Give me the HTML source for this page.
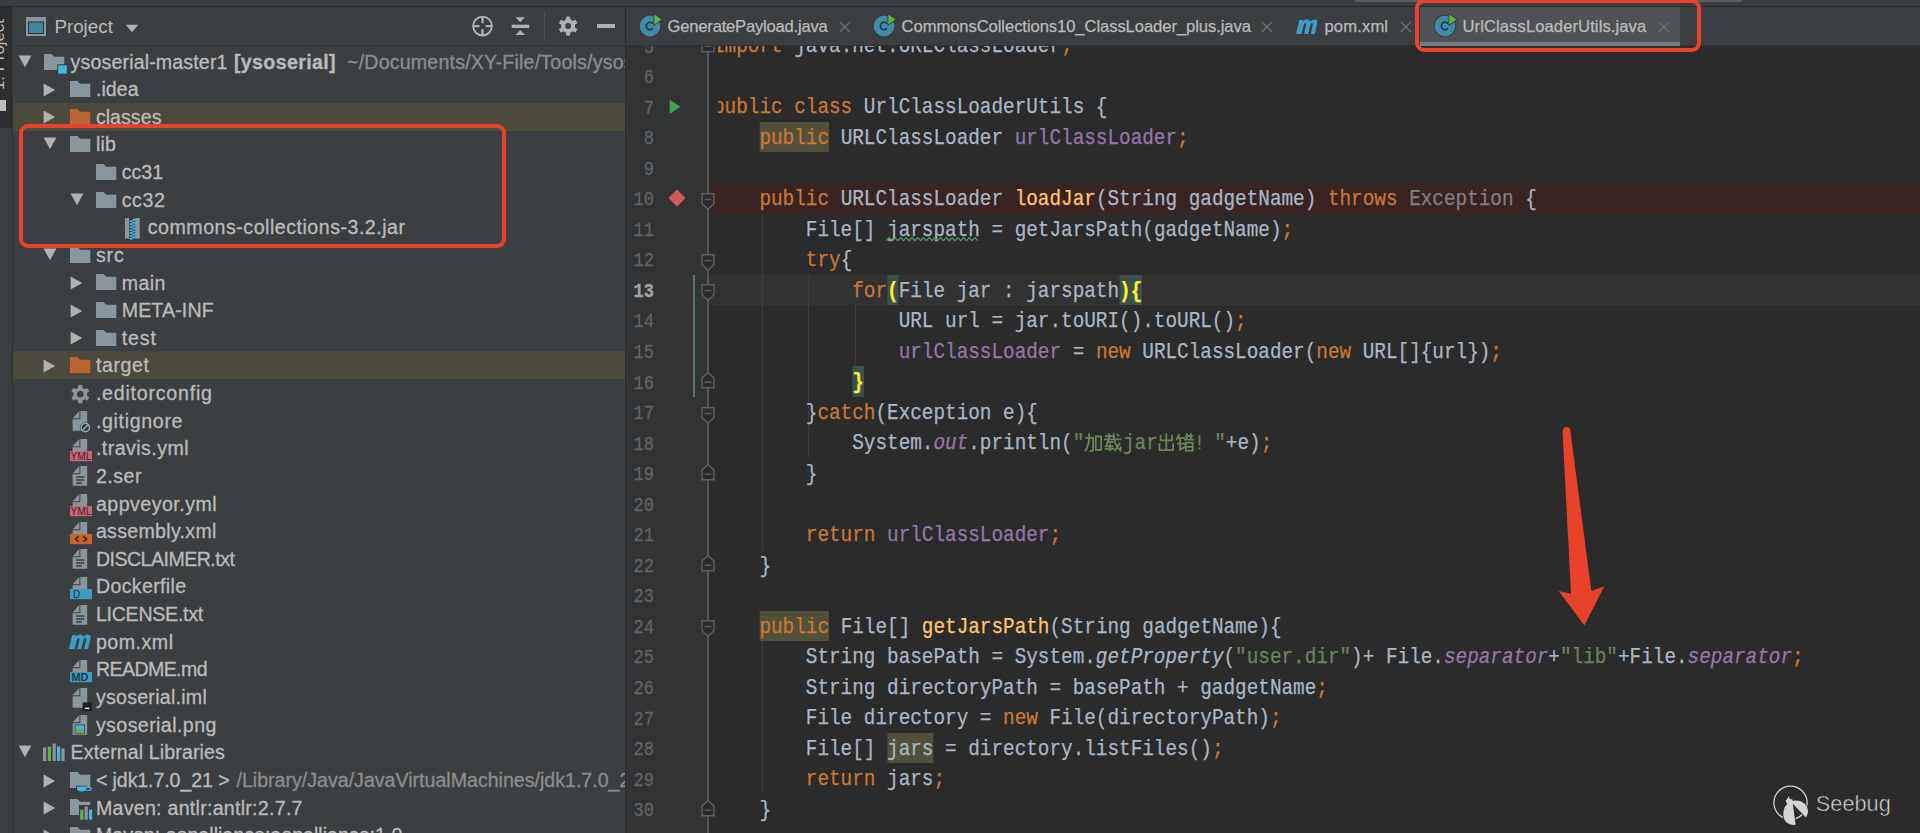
<!DOCTYPE html><html><head><meta charset="utf-8"><style>
*{margin:0;padding:0;box-sizing:border-box}
html,body{width:1920px;height:833px;overflow:hidden;background:#2B2B2B}
body{position:relative;font-family:"Liberation Sans",sans-serif}
.abs{position:absolute}
.row{position:absolute;left:13px;width:612px;height:27.63px;white-space:nowrap}
.tx{position:absolute;top:0;height:27.63px;line-height:27.63px;font-size:19.6px;color:#BBBBBB;white-space:pre;-webkit-text-stroke-width:0.3px}
.tri{position:absolute}
.ic{position:absolute;width:24px;height:24px}
.code{position:absolute;left:717.5px;top:46px;width:1204px;height:787px;overflow:hidden}
.ln{position:absolute;left:0;height:30.545px;line-height:30.545px;font-family:"Liberation Mono",monospace;font-size:21.5px;letter-spacing:0;transform:scaleX(0.8992);transform-origin:0 0;color:#A9B7C6;white-space:pre;-webkit-text-stroke-width:0.25px}
.k{color:#CC7832}
.f{color:#9876AA}
.m{color:#FFC66D}
.s{color:#6A8759}
.i{font-style:italic}
.w,.bm{position:relative;display:inline-block;height:30.545px;vertical-align:top}
.w::before,.bm::before{content:"";position:absolute;left:0;right:0;top:-1.0px;height:30.4px;z-index:-1}
.w::before{background:#52503A}
.bm::before{background:#3B514D}
.bm{color:#FFEF28;font-weight:bold}
.gr{color:#808080}
.cj{display:inline-block;width:21.5px}
.num{position:absolute;left:606px;width:48px;text-align:right;height:30.545px;line-height:30.545px;font-family:"Liberation Mono",monospace;font-size:20px;transform:scaleX(0.85);transform-origin:100% 0;color:#606366;-webkit-text-stroke-width:0.3px}
.tab{position:absolute;top:8px;height:38px;line-height:38px;font-size:16.5px;color:#BBBBBB;white-space:pre;-webkit-text-stroke-width:0.25px}
</style></head><body>
<div class="abs" style="left:0;top:0;width:1920px;height:6px;background:#3C3F41"></div>
<div class="abs" style="left:1355px;top:0;width:387px;height:2px;background:#5A5D5F;border-radius:1px"></div>
<div class="abs" style="left:0;top:6px;width:1920px;height:1px;background:#2B2B2B"></div>
<div class="abs" style="left:0;top:7px;width:12px;height:826px;background:#3C3F41"></div>
<div class="abs" style="left:0;top:7px;width:12px;height:121px;background:#2C2E30"></div>
<div class="abs" style="left:12px;top:7px;width:1px;height:826px;background:#2F3133"></div>
<div class="abs" style="left:13px;top:7px;width:612px;height:826px;background:#3C3F41"></div>
<div class="abs" style="left:13px;top:45px;width:612px;height:1px;background:#323232"></div>
<div class="abs" style="left:625px;top:7px;width:1px;height:826px;background:#2B2B2B"></div>
<div class="abs" style="left:626px;top:7px;width:1294px;height:38px;background:#3C3F41"></div>
<div class="abs" style="left:626px;top:45px;width:1294px;height:1px;background:#323232"></div>
<div class="abs" style="left:626px;top:46px;width:82px;height:787px;background:#313335"></div>
<div class="abs" style="left:708px;top:183.09px;width:1212px;height:30.545px;background:#3A2323"></div>
<div class="abs" style="left:626px;top:274.73px;width:82px;height:30.545px;background:#333537"></div>
<div class="abs" style="left:708px;top:274.73px;width:1212px;height:30.545px;background:#323232"></div>
<div class="abs" style="left:762.0px;top:213.63px;width:1px;height:336.00px;background:#3B3B3B"></div>
<div class="abs" style="left:808.4px;top:274.73px;width:1px;height:152.73px;background:#3B3B3B"></div>
<div class="abs" style="left:854.8px;top:305.27px;width:1px;height:61.09px;background:#3B3B3B"></div>
<div class="abs" style="left:808.4px;top:427.45px;width:1px;height:30.55px;background:#3B3B3B"></div>
<div class="abs" style="left:762.0px;top:641.26px;width:1px;height:152.73px;background:#3B3B3B"></div>
<div class="code">
<div class="ln" style="top:-14.64px;left:-4.90px"><span class="k">import</span> java.net.URLClassLoader<span class="k">;</span></div>
<div class="ln" style="top:15.91px;left:-4.90px"></div>
<div class="ln" style="top:46.45px;left:-4.90px"><span class="k">public class</span> UrlClassLoaderUtils {</div>
<div class="ln" style="top:77.00px;left:-4.90px">    <span class="k w">public</span> URLClassLoader <span class="f">urlClassLoader</span><span class="k">;</span></div>
<div class="ln" style="top:107.55px;left:-4.90px"></div>
<div class="ln" style="top:138.09px;left:-4.90px">    <span class="k">public</span> URLClassLoader <span class="m">loadJar</span>(String gadgetName) <span class="k">throws</span> <span class="gr">Exception</span> {</div>
<div class="ln" style="top:168.63px;left:-4.90px">        File[] <span class="typo">jarspath</span> = getJarsPath(gadgetName)<span class="k">;</span></div>
<div class="ln" style="top:199.18px;left:-4.90px">        <span class="k">try</span>{</div>
<div class="ln" style="top:229.73px;left:-4.90px">            <span class="k">for</span><span class="bm">(</span>File jar : jarspath<span class="bm">){</span></div>
<div class="ln" style="top:260.27px;left:-4.90px">                URL url = jar.toURI().toURL()<span class="k">;</span></div>
<div class="ln" style="top:290.81px;left:-4.90px">                <span class="f">urlClassLoader</span> = <span class="k">new</span> URLClassLoader(<span class="k">new</span> URL[]{url})<span class="k">;</span></div>
<div class="ln" style="top:321.36px;left:-4.90px">            <span class="bm">}</span></div>
<div class="ln" style="top:351.91px;left:-4.90px">        }<span class="k">catch</span>(Exception e){</div>
<div class="ln" style="top:382.45px;left:-4.90px">            System.<span class="f i">out</span>.println(<span class="s">"<span class="cj"></span><span class="cj"></span>jar<span class="cj"></span><span class="cj"></span><span class="cj" style="width:19.8px"></span>"</span>+e)<span class="k">;</span></div>
<div class="ln" style="top:413.00px;left:-4.90px">        }</div>
<div class="ln" style="top:443.54px;left:-4.90px"></div>
<div class="ln" style="top:474.09px;left:-4.90px">        <span class="k">return</span> <span class="f">urlClassLoader</span><span class="k">;</span></div>
<div class="ln" style="top:504.63px;left:-4.90px">    }</div>
<div class="ln" style="top:535.17px;left:-4.90px"></div>
<div class="ln" style="top:565.72px;left:-4.90px">    <span class="k w">public</span> File[] <span class="m">getJarsPath</span>(String gadgetName){</div>
<div class="ln" style="top:596.26px;left:-4.90px">        String basePath = System.<span class="i">getProperty</span>(<span class="s">"user.dir"</span>)+ File.<span class="f i">separator</span>+<span class="s">"lib"</span>+File.<span class="f i">separator</span><span class="k">;</span></div>
<div class="ln" style="top:626.81px;left:-4.90px">        String directoryPath = basePath + gadgetName<span class="k">;</span></div>
<div class="ln" style="top:657.36px;left:-4.90px">        File directory = <span class="k">new</span> File(directoryPath)<span class="k">;</span></div>
<div class="ln" style="top:687.90px;left:-4.90px">        File[] <span class="w">jars</span> = directory.listFiles()<span class="k">;</span></div>
<div class="ln" style="top:718.45px;left:-4.90px">        <span class="k">return</span> jars<span class="k">;</span></div>
<div class="ln" style="top:748.99px;left:-4.90px">    }</div>
</div>
<div class="abs" style="left:0;top:46px;width:1920px;height:787px;overflow:hidden"><div class="abs" style="left:0;top:-46px;width:1920px;height:833px">
<div class="num" style="top:32.56px;color:#606366;">5</div>
<div class="num" style="top:63.11px;color:#606366;">6</div>
<div class="num" style="top:93.66px;color:#606366;">7</div>
<div class="num" style="top:124.20px;color:#606366;">8</div>
<div class="num" style="top:154.75px;color:#606366;">9</div>
<div class="num" style="top:185.29px;color:#606366;">10</div>
<div class="num" style="top:215.83px;color:#606366;">11</div>
<div class="num" style="top:246.38px;color:#606366;">12</div>
<div class="num" style="top:276.93px;color:#A4A3A3;font-weight:bold;">13</div>
<div class="num" style="top:307.47px;color:#606366;">14</div>
<div class="num" style="top:338.01px;color:#606366;">15</div>
<div class="num" style="top:368.56px;color:#606366;">16</div>
<div class="num" style="top:399.11px;color:#606366;">17</div>
<div class="num" style="top:429.65px;color:#606366;">18</div>
<div class="num" style="top:460.19px;color:#606366;">19</div>
<div class="num" style="top:490.74px;color:#606366;">20</div>
<div class="num" style="top:521.29px;color:#606366;">21</div>
<div class="num" style="top:551.83px;color:#606366;">22</div>
<div class="num" style="top:582.38px;color:#606366;">23</div>
<div class="num" style="top:612.92px;color:#606366;">24</div>
<div class="num" style="top:643.47px;color:#606366;">25</div>
<div class="num" style="top:674.01px;color:#606366;">26</div>
<div class="num" style="top:704.56px;color:#606366;">27</div>
<div class="num" style="top:735.10px;color:#606366;">28</div>
<div class="num" style="top:765.65px;color:#606366;">29</div>
<div class="num" style="top:796.19px;color:#606366;">30</div>
<div class="num" style="top:826.74px;color:#606366;">31</div>
<div class="abs" style="left:707px;top:46px;width:1.5px;height:787px;background:#555759"></div>
<svg class="abs" style="left:700.6px;top:192.69px" width="15" height="17" viewBox="0 0 15 17"><path d="M1.1 0.7H12.9V10.8L7 16.3L1.1 10.8Z" fill="#2B2B2B" stroke="#5E6062" stroke-width="1.4"/><path d="M3.6 6.5H10.4" stroke="#5E6062" stroke-width="1.4"/></svg>
<svg class="abs" style="left:700.6px;top:253.78px" width="15" height="17" viewBox="0 0 15 17"><path d="M1.1 0.7H12.9V10.8L7 16.3L1.1 10.8Z" fill="#2B2B2B" stroke="#5E6062" stroke-width="1.4"/><path d="M3.6 6.5H10.4" stroke="#5E6062" stroke-width="1.4"/></svg>
<svg class="abs" style="left:700.6px;top:284.33px" width="15" height="17" viewBox="0 0 15 17"><path d="M1.1 0.7H12.9V10.8L7 16.3L1.1 10.8Z" fill="#2B2B2B" stroke="#5E6062" stroke-width="1.4"/><path d="M3.6 6.5H10.4" stroke="#5E6062" stroke-width="1.4"/></svg>
<svg class="abs" style="left:700.6px;top:406.51px" width="15" height="17" viewBox="0 0 15 17"><path d="M1.1 0.7H12.9V10.8L7 16.3L1.1 10.8Z" fill="#2B2B2B" stroke="#5E6062" stroke-width="1.4"/><path d="M3.6 6.5H10.4" stroke="#5E6062" stroke-width="1.4"/></svg>
<svg class="abs" style="left:700.6px;top:620.32px" width="15" height="17" viewBox="0 0 15 17"><path d="M1.1 0.7H12.9V10.8L7 16.3L1.1 10.8Z" fill="#2B2B2B" stroke="#5E6062" stroke-width="1.4"/><path d="M3.6 6.5H10.4" stroke="#5E6062" stroke-width="1.4"/></svg>
<svg class="abs" style="left:700.6px;top:36.16px" width="15" height="17" viewBox="0 0 15 17"><path d="M1.1 15.8H12.9V5.9L7 0.6L1.1 5.9Z" fill="#2B2B2B" stroke="#5E6062" stroke-width="1.4"/><path d="M3.6 10.2H10.4" stroke="#5E6062" stroke-width="1.4"/></svg>
<svg class="abs" style="left:700.6px;top:372.16px" width="15" height="17" viewBox="0 0 15 17"><path d="M1.1 15.8H12.9V5.9L7 0.6L1.1 5.9Z" fill="#2B2B2B" stroke="#5E6062" stroke-width="1.4"/><path d="M3.6 10.2H10.4" stroke="#5E6062" stroke-width="1.4"/></svg>
<svg class="abs" style="left:700.6px;top:463.80px" width="15" height="17" viewBox="0 0 15 17"><path d="M1.1 15.8H12.9V5.9L7 0.6L1.1 5.9Z" fill="#2B2B2B" stroke="#5E6062" stroke-width="1.4"/><path d="M3.6 10.2H10.4" stroke="#5E6062" stroke-width="1.4"/></svg>
<svg class="abs" style="left:700.6px;top:555.43px" width="15" height="17" viewBox="0 0 15 17"><path d="M1.1 15.8H12.9V5.9L7 0.6L1.1 5.9Z" fill="#2B2B2B" stroke="#5E6062" stroke-width="1.4"/><path d="M3.6 10.2H10.4" stroke="#5E6062" stroke-width="1.4"/></svg>
<svg class="abs" style="left:700.6px;top:799.79px" width="15" height="17" viewBox="0 0 15 17"><path d="M1.1 15.8H12.9V5.9L7 0.6L1.1 5.9Z" fill="#2B2B2B" stroke="#5E6062" stroke-width="1.4"/><path d="M3.6 10.2H10.4" stroke="#5E6062" stroke-width="1.4"/></svg>
<div class="abs" style="left:693px;top:274.73px;width:2.3px;height:122.18px;background:#53796F"></div>
<svg class="abs" style="left:669px;top:98.5px" width="12" height="16" viewBox="0 0 12 16"><path d="M0.7 0.5L11.3 7.7L0.7 15Z" fill="#499C54"/></svg>
<svg class="abs" style="left:668px;top:188.5px" width="18" height="18" viewBox="0 0 18 18"><path d="M9 0.4L17.6 9L9 17.6L0.4 9Z" fill="#D05A55"/></svg>
</div></div>
<svg class="abs" style="left:880px;top:236.5px" width="110" height="5" viewBox="0 0 110 5"><polyline points="6.30,3.60 9.16,0.60 12.02,3.60 14.88,0.60 17.74,3.60 20.60,0.60 23.46,3.60 26.32,0.60 29.18,3.60 32.04,0.60 34.90,3.60 37.76,0.60 40.62,3.60 43.48,0.60 46.34,3.60 49.20,0.60 52.06,3.60 54.92,0.60 57.78,3.60 60.64,0.60 63.50,3.60 66.36,0.60 69.22,3.60 72.08,0.60 74.94,3.60 77.80,0.60 80.66,3.60 83.52,0.60 86.38,3.60 89.24,0.60 92.10,3.60 94.96,0.60 97.82,3.60" fill="none" stroke="#5E9B69" stroke-width="1.2"/></svg>
<svg class="abs" style="left:0;top:0" width="1920" height="833" viewBox="0 0 1920 833"><path d="M1085.3 437.9H1093.1V449.2Q1093.1 451 1091.3 451H1089.6 M1089.1 433.2V438.5Q1088.6 446.5 1085 451.2 M1095.8 436.3H1101.1V449.9H1095.8Z M1105 436H1113.2 M1109.1 433.2V439.2 M1104 439.3H1121.3 M1106.6 442.2H1113.6 M1108.6 439.9L1105.9 446.4H1113.8 M1110 443.8V451.2 M1104.8 448.8H1114.2 M1113.6 433.2Q1114.2 446 1120.6 450.6V446.3 M1117 434L1118.9 436.4 M1120 442.8L1114.6 451.1 M1166.3 433.2V450 M1160.6 434.8V440.4H1172.1V434.8 M1159.5 443.2V450H1173.1V443.2 M1179.4 434L1176.3 440 M1178 438.1H1185.2 M1177 443.5H1184.8 M1180.1 438.5V450.3 M1179.4 450.3L1185 446.8 M1186.8 433.2V439.7 M1190.9 433.2V439.7 M1185.2 436H1193.4 M1184 439.7H1194.1 M1185.7 442.7H1192.7V450.7H1185.7Z M1185.7 446.8H1192.7 M1199.5 435.3V445.4" fill="none" stroke="#6A8759" stroke-width="1.75"/><circle cx="1199.5" cy="448.3" r="1.1" fill="#6A8759"/></svg>
<div class="abs" style="left:0;top:7px;width:12px;height:121px;overflow:hidden"><div class="abs" style="left:-11.2px;top:82.5px;height:20px;line-height:20px;font-size:16.8px;color:#BBBBBB;white-space:nowrap;transform:rotate(-90deg);transform-origin:0 0">1: Project</div><div class="abs" style="left:0;top:93px;width:6px;height:10.8px;background:#BDBDBD"></div></div>
<svg class="abs" style="left:25px;top:16px" width="22" height="21" viewBox="0 0 22 21"><rect x="1" y="1" width="20" height="19" fill="#8A969D"/><rect x="3" y="5.5" width="16" height="12.5" fill="#2F3133"/><rect x="4" y="6.5" width="14" height="10.5" fill="#3E87A3"/></svg>
<div class="abs" style="left:54.4px;top:8px;height:38px;line-height:38px;font-size:18.8px;color:#BBBBBB;white-space:pre">Project</div>
<svg class="abs" style="left:125px;top:24px" width="14" height="9" viewBox="0 0 14 9"><path d="M0.8 0.8H13.2L7 8.2Z" fill="#AFB1B3"/></svg>
<svg class="abs" style="left:471px;top:15px" width="23" height="23" viewBox="0 0 23 23"><circle cx="11.5" cy="11.1" r="9.4" fill="none" stroke="#AFB1B3" stroke-width="1.9"/><path d="M11.5 2V8.2M11.5 14V20.2M2.2 11.1H8.4M14.6 11.1H20.8" stroke="#AFB1B3" stroke-width="2.3"/></svg>
<svg class="abs" style="left:511px;top:16px" width="19" height="20" viewBox="0 0 19 20"><path d="M4.4 1.2H14L9.2 6.2Z" fill="#AFB1B3"/><rect x="0.7" y="8.7" width="17.5" height="3.3" fill="#AFB1B3"/><path d="M4.4 19.1H14L9.2 14Z" fill="#AFB1B3"/></svg>
<div class="abs" style="left:544px;top:11px;width:1.2px;height:30px;background:#515457"></div>
<svg class="abs" style="left:557px;top:15px" width="22" height="22" viewBox="0 0 22 22"><circle cx="11.1" cy="11.1" r="7.0" fill="#AFB1B3"/><rect x="9.00" y="1.50" width="4.2" height="9.60" rx="0.8" fill="#AFB1B3" transform="rotate(0.0 11.1 11.1)"/><rect x="9.00" y="1.50" width="4.2" height="9.60" rx="0.8" fill="#AFB1B3" transform="rotate(60.0 11.1 11.1)"/><rect x="9.00" y="1.50" width="4.2" height="9.60" rx="0.8" fill="#AFB1B3" transform="rotate(120.0 11.1 11.1)"/><rect x="9.00" y="1.50" width="4.2" height="9.60" rx="0.8" fill="#AFB1B3" transform="rotate(180.0 11.1 11.1)"/><rect x="9.00" y="1.50" width="4.2" height="9.60" rx="0.8" fill="#AFB1B3" transform="rotate(240.0 11.1 11.1)"/><rect x="9.00" y="1.50" width="4.2" height="9.60" rx="0.8" fill="#AFB1B3" transform="rotate(300.0 11.1 11.1)"/><circle cx="11.1" cy="11.1" r="3.0" fill="#3C3F41"/></svg>
<div class="abs" style="left:597px;top:24.3px;width:18px;height:3.6px;background:#AFB1B3"></div>
<div class="abs" style="left:13px;top:46px;width:612px;height:787px;overflow:hidden"><div class="abs" style="left:-13px;top:-46px;width:625px;height:833px">
<svg class="abs" style="left:17.5px;top:54.5px" width="14" height="13" viewBox="0 0 14 13"><path d="M0.6 0.6H13.4L7 12.2Z" fill="#AFB1B3"/></svg>
<svg class="abs" style="left:43.6px;top:54.2px" width="25" height="22" viewBox="0 0 25 22"><path d="M0 0H7.5L10.2 2.8H20.3V16H0Z" fill="#8A969D"/><rect x="13.2" y="10.3" width="10.2" height="9.8" fill="#3C3F41"/><rect x="14.2" y="11.3" width="8.6" height="8.4" fill="#40B6E0"/></svg>
<div class="tx" style="left:70.6px;top:48.50px;color:#BBBBBB;letter-spacing:0.140px;">ysoserial-master1</div>
<div class="tx" style="left:234.0px;top:48.50px;color:#BBBBBB;letter-spacing:0.350px;"><b>[ysoserial]</b></div>
<div class="tx" style="left:347.0px;top:48.50px;color:#8C8C8C;letter-spacing:0.200px;">~/Documents/XY-File/Tools/ysoserial-master1</div>
<svg class="abs" style="left:43.0px;top:82.7px" width="13" height="14" viewBox="0 0 13 14"><path d="M0.6 0.6L12.2 7L0.6 13.4Z" fill="#AFB1B3"/></svg>
<svg class="abs" style="left:69.8px;top:81.0px" width="24" height="24" viewBox="0 0 24 24"><path d="M0 0H7.5L10.2 2.8H20.3V16H0Z" fill="#8A969D"/></svg>
<div class="tx" style="left:95.9px;top:76.13px;color:#BBBBBB;letter-spacing:0.075px;">.idea</div>
<div class="abs" style="left:13px;top:102.76px;width:612px;height:27.93px;background:#4C493D"></div>
<svg class="abs" style="left:43.0px;top:110.4px" width="13" height="14" viewBox="0 0 13 14"><path d="M0.6 0.6L12.2 7L0.6 13.4Z" fill="#AFB1B3"/></svg>
<svg class="abs" style="left:69.8px;top:108.7px" width="24" height="24" viewBox="0 0 24 24"><path d="M0 0H7.5L10.2 2.8H20.3V16H0Z" fill="#BA6432"/></svg>
<div class="tx" style="left:95.9px;top:103.76px;color:#BBBBBB;letter-spacing:0.033px;">classes</div>
<svg class="abs" style="left:43.0px;top:137.4px" width="14" height="13" viewBox="0 0 14 13"><path d="M0.6 0.6H13.4L7 12.2Z" fill="#AFB1B3"/></svg>
<svg class="abs" style="left:69.8px;top:136.3px" width="24" height="24" viewBox="0 0 24 24"><path d="M0 0H7.5L10.2 2.8H20.3V16H0Z" fill="#8A969D"/></svg>
<div class="tx" style="left:95.9px;top:131.39px;color:#BBBBBB;letter-spacing:0.250px;">lib</div>
<svg class="abs" style="left:95.8px;top:163.9px" width="24" height="24" viewBox="0 0 24 24"><path d="M0 0H7.5L10.2 2.8H20.3V16H0Z" fill="#8A969D"/></svg>
<div class="tx" style="left:121.7px;top:159.02px;color:#BBBBBB;letter-spacing:0.000px;">cc31</div>
<svg class="abs" style="left:69.8px;top:192.7px" width="14" height="13" viewBox="0 0 14 13"><path d="M0.6 0.6H13.4L7 12.2Z" fill="#AFB1B3"/></svg>
<svg class="abs" style="left:95.8px;top:191.6px" width="24" height="24" viewBox="0 0 24 24"><path d="M0 0H7.5L10.2 2.8H20.3V16H0Z" fill="#8A969D"/></svg>
<div class="tx" style="left:121.7px;top:186.65px;color:#BBBBBB;letter-spacing:0.600px;">cc32</div>
<svg class="abs" style="left:125px;top:217.68px" width="16" height="22" viewBox="0 0 16 22"><rect x="0" y="0" width="14.7" height="20.6" fill="#8A969D"/><rect x="4.3" y="0" width="5.8" height="20.6" fill="#2A2C2D"/><ellipse cx="6.2" cy="3.30" rx="1.7" ry="1.1" fill="#40B6E0"/><ellipse cx="8.8" cy="1.90" rx="1.7" ry="1.1" fill="#40B6E0"/><ellipse cx="6.2" cy="6.20" rx="1.7" ry="1.1" fill="#40B6E0"/><ellipse cx="8.8" cy="4.80" rx="1.7" ry="1.1" fill="#40B6E0"/><ellipse cx="6.2" cy="9.10" rx="1.7" ry="1.1" fill="#40B6E0"/><ellipse cx="8.8" cy="7.70" rx="1.7" ry="1.1" fill="#40B6E0"/><ellipse cx="6.2" cy="12.00" rx="1.7" ry="1.1" fill="#40B6E0"/><ellipse cx="8.8" cy="10.60" rx="1.7" ry="1.1" fill="#40B6E0"/><ellipse cx="6.2" cy="14.90" rx="1.7" ry="1.1" fill="#40B6E0"/><ellipse cx="8.8" cy="13.50" rx="1.7" ry="1.1" fill="#40B6E0"/><ellipse cx="6.2" cy="17.80" rx="1.7" ry="1.1" fill="#40B6E0"/><ellipse cx="8.8" cy="16.40" rx="1.7" ry="1.1" fill="#40B6E0"/><ellipse cx="6.2" cy="20.70" rx="1.7" ry="1.1" fill="#40B6E0"/><ellipse cx="8.8" cy="19.30" rx="1.7" ry="1.1" fill="#40B6E0"/></svg>
<div class="tx" style="left:147.8px;top:214.28px;color:#BBBBBB;letter-spacing:0.512px;">commons-collections-3.2.jar</div>
<svg class="abs" style="left:43.0px;top:247.9px" width="14" height="13" viewBox="0 0 14 13"><path d="M0.6 0.6H13.4L7 12.2Z" fill="#AFB1B3"/></svg>
<svg class="abs" style="left:69.8px;top:246.8px" width="24" height="24" viewBox="0 0 24 24"><path d="M0 0H7.5L10.2 2.8H20.3V16H0Z" fill="#8A969D"/></svg>
<div class="tx" style="left:95.9px;top:241.91px;color:#BBBBBB;letter-spacing:0.900px;">src</div>
<svg class="abs" style="left:69.8px;top:276.1px" width="13" height="14" viewBox="0 0 13 14"><path d="M0.6 0.6L12.2 7L0.6 13.4Z" fill="#AFB1B3"/></svg>
<svg class="abs" style="left:95.8px;top:274.4px" width="24" height="24" viewBox="0 0 24 24"><path d="M0 0H7.5L10.2 2.8H20.3V16H0Z" fill="#8A969D"/></svg>
<div class="tx" style="left:121.7px;top:269.54px;color:#BBBBBB;letter-spacing:0.400px;">main</div>
<svg class="abs" style="left:69.8px;top:303.8px" width="13" height="14" viewBox="0 0 13 14"><path d="M0.6 0.6L12.2 7L0.6 13.4Z" fill="#AFB1B3"/></svg>
<svg class="abs" style="left:95.8px;top:302.1px" width="24" height="24" viewBox="0 0 24 24"><path d="M0 0H7.5L10.2 2.8H20.3V16H0Z" fill="#8A969D"/></svg>
<div class="tx" style="left:121.7px;top:297.17px;color:#BBBBBB;letter-spacing:0.129px;">META-INF</div>
<svg class="abs" style="left:69.8px;top:331.4px" width="13" height="14" viewBox="0 0 13 14"><path d="M0.6 0.6L12.2 7L0.6 13.4Z" fill="#AFB1B3"/></svg>
<svg class="abs" style="left:95.8px;top:329.7px" width="24" height="24" viewBox="0 0 24 24"><path d="M0 0H7.5L10.2 2.8H20.3V16H0Z" fill="#8A969D"/></svg>
<div class="tx" style="left:121.7px;top:324.80px;color:#BBBBBB;letter-spacing:0.900px;">test</div>
<div class="abs" style="left:13px;top:351.43px;width:612px;height:27.93px;background:#4C493D"></div>
<svg class="abs" style="left:43.0px;top:359.0px" width="13" height="14" viewBox="0 0 13 14"><path d="M0.6 0.6L12.2 7L0.6 13.4Z" fill="#AFB1B3"/></svg>
<svg class="abs" style="left:69.8px;top:357.3px" width="24" height="24" viewBox="0 0 24 24"><path d="M0 0H7.5L10.2 2.8H20.3V16H0Z" fill="#BA6432"/></svg>
<div class="tx" style="left:95.9px;top:352.43px;color:#BBBBBB;letter-spacing:0.600px;">target</div>
<svg class="abs" style="left:69.5px;top:383.56px" width="21" height="21" viewBox="0 0 21 21"><circle cx="10.3" cy="10.3" r="6.8" fill="#8A969D"/><rect x="8.20" y="1.00" width="4.2" height="9.30" rx="0.8" fill="#8A969D" transform="rotate(0.0 10.3 10.3)"/><rect x="8.20" y="1.00" width="4.2" height="9.30" rx="0.8" fill="#8A969D" transform="rotate(60.0 10.3 10.3)"/><rect x="8.20" y="1.00" width="4.2" height="9.30" rx="0.8" fill="#8A969D" transform="rotate(120.0 10.3 10.3)"/><rect x="8.20" y="1.00" width="4.2" height="9.30" rx="0.8" fill="#8A969D" transform="rotate(180.0 10.3 10.3)"/><rect x="8.20" y="1.00" width="4.2" height="9.30" rx="0.8" fill="#8A969D" transform="rotate(240.0 10.3 10.3)"/><rect x="8.20" y="1.00" width="4.2" height="9.30" rx="0.8" fill="#8A969D" transform="rotate(300.0 10.3 10.3)"/><circle cx="10.3" cy="10.3" r="3.2" fill="#3C3F41"/></svg>
<div class="tx" style="left:95.9px;top:380.06px;color:#BBBBBB;letter-spacing:0.775px;">.editorconfig</div>
<svg class="abs" style="left:69.9px;top:411.2px" width="26" height="24" viewBox="0 0 26 24"><path d="M10.4 0H17.2V19.8H2.6V8.2H10.4Z" fill="#8A969D"/><path d="M2.6 7.2L9.4 0V7.2Z" fill="#8A969D"/><circle cx="15.3" cy="16.5" r="5.4" fill="#3C3F41"/><circle cx="15.3" cy="16.5" r="4.2" fill="none" stroke="#9AA7B0" stroke-width="1.4"/><path d="M12.6 19.2L18 13.8" stroke="#9AA7B0" stroke-width="1.4"/></svg>
<div class="tx" style="left:95.9px;top:407.69px;color:#BBBBBB;letter-spacing:0.667px;">.gitignore</div>
<svg class="abs" style="left:69.9px;top:438.82px" width="24" height="24" viewBox="0 0 24 24"><path d="M10.4 0H17.2V13.5H2.6V8.2H10.4Z" fill="#8A969D"/><path d="M2.6 7.2L9.4 0V7.2Z" fill="#8A969D"/><rect x="0" y="12" width="22" height="10.2" fill="#C7667A"/><text x="11" y="20.6" text-anchor="middle" font-family="Liberation Sans" font-size="10" fill="#4A1F26" textLength="21" lengthAdjust="spacingAndGlyphs">YML</text></svg>
<div class="tx" style="left:95.9px;top:435.32px;color:#BBBBBB;letter-spacing:0.450px;">.travis.yml</div>
<svg class="abs" style="left:69.9px;top:466.4px" width="26" height="24" viewBox="0 0 26 24"><path d="M10.4 0H17.2V19.8H2.6V8.2H10.4Z" fill="#8A969D"/><path d="M2.6 7.2L9.4 0V7.2Z" fill="#8A969D"/><path d="M6.2 11H14.2M6.2 14H14.2M6.2 17H12.0" stroke="#3C3F41" stroke-width="1.5"/></svg>
<div class="tx" style="left:95.9px;top:462.95px;color:#BBBBBB;letter-spacing:0.500px;">2.ser</div>
<svg class="abs" style="left:69.9px;top:494.08px" width="24" height="24" viewBox="0 0 24 24"><path d="M10.4 0H17.2V13.5H2.6V8.2H10.4Z" fill="#8A969D"/><path d="M2.6 7.2L9.4 0V7.2Z" fill="#8A969D"/><rect x="0" y="12" width="22" height="10.2" fill="#C7667A"/><text x="11" y="20.6" text-anchor="middle" font-family="Liberation Sans" font-size="10" fill="#4A1F26" textLength="21" lengthAdjust="spacingAndGlyphs">YML</text></svg>
<div class="tx" style="left:95.9px;top:490.58px;color:#BBBBBB;letter-spacing:0.477px;">appveyor.yml</div>
<svg class="abs" style="left:69.9px;top:521.71px" width="24" height="24" viewBox="0 0 24 24"><path d="M10.4 0H17.2V13.5H2.6V8.2H10.4Z" fill="#8A969D"/><path d="M2.6 7.2L9.4 0V7.2Z" fill="#8A969D"/><rect x="0" y="12" width="22" height="10.2" fill="#C8632C"/><path d="M8.6 14.2L5.5 17L8.6 19.8M13.4 14.2L16.5 17L13.4 19.8" stroke="#3A2216" stroke-width="1.5" fill="none"/></svg>
<div class="tx" style="left:95.9px;top:518.21px;color:#BBBBBB;letter-spacing:0.295px;">assembly.xml</div>
<svg class="abs" style="left:69.9px;top:549.3px" width="26" height="24" viewBox="0 0 26 24"><path d="M10.4 0H17.2V19.8H2.6V8.2H10.4Z" fill="#8A969D"/><path d="M2.6 7.2L9.4 0V7.2Z" fill="#8A969D"/><path d="M6.2 11H14.2M6.2 14H14.2M6.2 17H12.0" stroke="#3C3F41" stroke-width="1.5"/></svg>
<div class="tx" style="left:95.9px;top:545.84px;color:#BBBBBB;letter-spacing:-0.531px;">DISCLAIMER.txt</div>
<svg class="abs" style="left:69.9px;top:576.97px" width="24" height="24" viewBox="0 0 24 24"><path d="M10.4 0H17.2V13.5H2.6V8.2H10.4Z" fill="#8A969D"/><path d="M2.6 7.2L9.4 0V7.2Z" fill="#8A969D"/><rect x="0" y="12" width="22" height="10.2" fill="#3E9AC1"/><text x="3" y="20.8" font-family="Liberation Sans" font-size="10" fill="#1D3A47">D</text></svg>
<div class="tx" style="left:95.9px;top:573.47px;color:#BBBBBB;letter-spacing:0.344px;">Dockerfile</div>
<svg class="abs" style="left:69.9px;top:604.6px" width="26" height="24" viewBox="0 0 26 24"><path d="M10.4 0H17.2V19.8H2.6V8.2H10.4Z" fill="#8A969D"/><path d="M2.6 7.2L9.4 0V7.2Z" fill="#8A969D"/><path d="M6.2 11H14.2M6.2 14H14.2M6.2 17H12.0" stroke="#3C3F41" stroke-width="1.5"/></svg>
<div class="tx" style="left:95.9px;top:601.10px;color:#BBBBBB;letter-spacing:-0.260px;">LICENSE.txt</div>
<svg class="abs" style="left:68.6px;top:633.9px" width="22.4" height="15" viewBox="0 0 23 15" preserveAspectRatio="none"><path d="M0 15L3.3 1H7.4L7.1 2.4Q9 0.6 11.6 0.6Q14.2 0.6 14.8 2.6Q16.9 0.6 19.4 0.6Q22.9 0.6 22.1 4.4L19.6 15H15.5L17.7 5.6Q18 4.1 16.8 4.1Q15.4 4.1 14.9 5.9L12.7 15H8.6L10.8 5.6Q11.1 4.1 9.9 4.1Q8.5 4.1 8 5.9L5.9 15Z" fill="#3E9DC6"/></svg>
<div class="tx" style="left:95.9px;top:628.73px;color:#BBBBBB;letter-spacing:0.517px;">pom.xml</div>
<svg class="abs" style="left:69.9px;top:659.86px" width="24" height="24" viewBox="0 0 24 24"><path d="M10.4 0H17.2V13.5H2.6V8.2H10.4Z" fill="#8A969D"/><path d="M2.6 7.2L9.4 0V7.2Z" fill="#8A969D"/><rect x="0" y="12" width="22" height="10.2" fill="#3E9AC1"/><text x="1.5" y="20.8" font-family="Liberation Sans" font-weight="bold" font-size="10" fill="#1D3A47" textLength="17" lengthAdjust="spacingAndGlyphs">MD</text></svg>
<div class="tx" style="left:95.9px;top:656.36px;color:#BBBBBB;letter-spacing:-0.600px;">README.md</div>
<svg class="abs" style="left:69.9px;top:687.5px" width="26" height="24" viewBox="0 0 26 24"><path d="M10.4 0H17.2V19.8H2.6V8.2H10.4Z" fill="#8A969D"/><path d="M2.6 7.2L9.4 0V7.2Z" fill="#8A969D"/><rect x="12.6" y="14.4" width="9.2" height="8.6" fill="#1E1F20"/><rect x="14.8" y="19.6" width="4.6" height="1.5" fill="#DDDDDD"/></svg>
<div class="tx" style="left:95.9px;top:683.99px;color:#BBBBBB;letter-spacing:0.258px;">ysoserial.iml</div>
<svg class="abs" style="left:69.9px;top:715.1px" width="26" height="24" viewBox="0 0 26 24"><path d="M10.4 0H17.2V19.8H2.6V8.2H10.4Z" fill="#8A969D"/><path d="M2.6 7.2L9.4 0V7.2Z" fill="#8A969D"/><rect x="4.8" y="9.6" width="10.2" height="9" fill="#3C3F41" stroke="#8A969D" stroke-width="0"/><rect x="5.6" y="10.4" width="8.6" height="7.4" fill="#40B6E0"/><path d="M5.6 17.8V15.2Q8 12.8 10.3 14.6Q12.3 15.6 14.2 14.2V17.8Z" fill="#62B543"/></svg>
<div class="tx" style="left:95.9px;top:711.62px;color:#BBBBBB;letter-spacing:0.417px;">ysoserial.png</div>
<svg class="abs" style="left:17.5px;top:745.2px" width="14" height="13" viewBox="0 0 14 13"><path d="M0.6 0.6H13.4L7 12.2Z" fill="#AFB1B3"/></svg>
<svg class="abs" style="left:43px;top:742.55px" width="22" height="19" viewBox="0 0 22 19"><rect x="0" y="4.5" width="3.2" height="13.5" fill="#8A969D"/><rect x="4.8" y="3.5" width="3.2" height="14.5" fill="#62B543"/><rect x="9.6" y="0.5" width="3.2" height="17.5" fill="#8A969D"/><rect x="14" y="3.5" width="3.2" height="14.5" fill="#40B6E0"/><rect x="18.4" y="5.5" width="3.2" height="12.5" fill="#8A969D"/></svg>
<div class="tx" style="left:70.6px;top:739.25px;color:#BBBBBB;letter-spacing:0.106px;">External Libraries</div>
<svg class="abs" style="left:43.0px;top:773.5px" width="13" height="14" viewBox="0 0 13 14"><path d="M0.6 0.6L12.2 7L0.6 13.4Z" fill="#AFB1B3"/></svg>
<svg class="abs" style="left:69.9px;top:771.8px" width="24" height="24" viewBox="0 0 24 24"><path d="M0 0H7.5L10.2 2.8H20.3V16H0Z" fill="#8A969D"/><path d="M6 13.8H17.2V16.5Q17.2 20.2 11.6 20.2Q6 20.2 6 16.5Z" fill="#3C3F41"/><path d="M7 14.6H16.5V16.6Q16.5 19.4 11.8 19.4Q7 19.4 7 16.6Z" fill="#40B6E0"/><path d="M16.2 15.4H19.6Q21.4 15.4 21.4 16.9Q21.4 18.4 19.6 18.4H16" stroke="#40B6E0" stroke-width="1.3" fill="none"/></svg>
<div class="tx" style="left:95.9px;top:766.88px;color:#BBBBBB;letter-spacing:-0.100px;">&lt; jdk1.7.0_21 &gt;</div>
<div class="tx" style="left:236.5px;top:766.88px;color:#8C8C8C;letter-spacing:0.000px;">/Library/Java/JavaVirtualMachines/jdk1.7.0_21.jdk/Contents/Home</div>
<svg class="abs" style="left:43.0px;top:801.1px" width="13" height="14" viewBox="0 0 13 14"><path d="M0.6 0.6L12.2 7L0.6 13.4Z" fill="#AFB1B3"/></svg>
<svg class="abs" style="left:69.9px;top:799.4px" width="24" height="24" viewBox="0 0 24 24"><path d="M0 0H7.5L10.2 2.8H20.3V16H0Z" fill="#8A969D"/><rect x="9" y="6" width="15" height="18" fill="#3C3F41"/><rect x="10.2" y="10.6" width="3.2" height="10" fill="#62B543"/><rect x="14.6" y="7.4" width="3.2" height="13.2" fill="#8A969D"/><rect x="19" y="10.6" width="3.2" height="10" fill="#40B6E0"/></svg>
<div class="tx" style="left:95.9px;top:794.51px;color:#BBBBBB;letter-spacing:0.270px;">Maven: antlr:antlr:2.7.7</div>
<svg class="abs" style="left:43.0px;top:828.7px" width="13" height="14" viewBox="0 0 13 14"><path d="M0.6 0.6L12.2 7L0.6 13.4Z" fill="#AFB1B3"/></svg>
<svg class="abs" style="left:69.9px;top:827.0px" width="24" height="24" viewBox="0 0 24 24"><path d="M0 0H7.5L10.2 2.8H20.3V16H0Z" fill="#8A969D"/><rect x="9" y="6" width="15" height="18" fill="#3C3F41"/><rect x="10.2" y="10.6" width="3.2" height="10" fill="#62B543"/><rect x="14.6" y="7.4" width="3.2" height="13.2" fill="#8A969D"/><rect x="19" y="10.6" width="3.2" height="10" fill="#40B6E0"/></svg>
<div class="tx" style="left:95.9px;top:822.14px;color:#BBBBBB;letter-spacing:0.009px;">Maven: aopalliance:aopalliance:1.0</div>
</div></div>
<div class="abs" style="left:19px;top:124.4px;width:487px;height:123.6px;border:4.4px solid #E8432A;border-radius:9px"></div>
<div class="abs" style="left:1420px;top:7px;width:260px;height:38px;background:#4E5254"></div>
<div class="abs" style="left:1420px;top:42.4px;width:260px;height:3.6px;background:#747A80"></div>
<svg class="abs" style="left:638.0px;top:12.1px" width="26" height="26" viewBox="0 0 26 26"><circle cx="12" cy="14" r="11.2" fill="#33373A"/><circle cx="12" cy="14" r="10.4" fill="#418AA8"/><path d="M14.9 11.7A3.7 3.7 0 1 0 14.9 16.3" fill="none" stroke="#1D3541" stroke-width="1.5"/><path d="M15.5 1L25 7.6L15.5 14Z" fill="#33373A"/><path d="M16.3 2.4L23.6 7.6L16.3 12.5Z" fill="#62B543"/></svg>
<div class="tab" style="left:667.6px;font-size:16.6px;letter-spacing:-0.210px">GeneratePayload.java</div>
<svg class="abs" style="left:839.3px;top:20.6px" width="12" height="12" viewBox="0 0 12 12"><path d="M0.6 0.6L11.2 11.2M11.2 0.6L0.6 11.2" stroke="#6E7274" stroke-width="1.3"/></svg>
<svg class="abs" style="left:871.7px;top:12.1px" width="26" height="26" viewBox="0 0 26 26"><circle cx="12" cy="14" r="11.2" fill="#33373A"/><circle cx="12" cy="14" r="10.4" fill="#418AA8"/><path d="M14.9 11.7A3.7 3.7 0 1 0 14.9 16.3" fill="none" stroke="#1D3541" stroke-width="1.5"/><path d="M15.5 1L25 7.6L15.5 14Z" fill="#33373A"/><path d="M16.3 2.4L23.6 7.6L16.3 12.5Z" fill="#62B543"/></svg>
<div class="tab" style="left:901.6px;font-size:16.6px;letter-spacing:-0.074px">CommonsCollections10_ClassLoader_plus.java</div>
<svg class="abs" style="left:1261.0px;top:20.6px" width="12" height="12" viewBox="0 0 12 12"><path d="M0.6 0.6L11.2 11.2M11.2 0.6L0.6 11.2" stroke="#6E7274" stroke-width="1.3"/></svg>
<svg class="abs" style="left:1295.8px;top:18.8px" width="22" height="15" viewBox="0 0 23 15" preserveAspectRatio="none"><path d="M0 15L3.3 1H7.4L7.1 2.4Q9 0.6 11.6 0.6Q14.2 0.6 14.8 2.6Q16.9 0.6 19.4 0.6Q22.9 0.6 22.1 4.4L19.6 15H15.5L17.7 5.6Q18 4.1 16.8 4.1Q15.4 4.1 14.9 5.9L12.7 15H8.6L10.8 5.6Q11.1 4.1 9.9 4.1Q8.5 4.1 8 5.9L5.9 15Z" fill="#3E9DC6"/></svg>
<div class="tab" style="left:1324.5px;font-size:16.6px;letter-spacing:0.143px">pom.xml</div>
<svg class="abs" style="left:1399.7px;top:20.6px" width="12" height="12" viewBox="0 0 12 12"><path d="M0.6 0.6L11.2 11.2M11.2 0.6L0.6 11.2" stroke="#6E7274" stroke-width="1.3"/></svg>
<svg class="abs" style="left:1433.0px;top:12.1px" width="26" height="26" viewBox="0 0 26 26"><circle cx="12" cy="14" r="11.2" fill="#33373A"/><circle cx="12" cy="14" r="10.4" fill="#418AA8"/><path d="M14.9 11.7A3.7 3.7 0 1 0 14.9 16.3" fill="none" stroke="#1D3541" stroke-width="1.5"/><path d="M15.5 1L25 7.6L15.5 14Z" fill="#33373A"/><path d="M16.3 2.4L23.6 7.6L16.3 12.5Z" fill="#62B543"/></svg>
<div class="tab" style="left:1462.5px;font-size:16.6px;letter-spacing:0.088px">UrlClassLoaderUtils.java</div>
<svg class="abs" style="left:1657.5px;top:20.6px" width="12" height="12" viewBox="0 0 12 12"><path d="M0.6 0.6L11.2 11.2M11.2 0.6L0.6 11.2" stroke="#6E7274" stroke-width="1.3"/></svg>
<div class="abs" style="left:1415px;top:-1.5px;width:286px;height:53.2px;border:4.4px solid #E8432A;border-radius:9px"></div>
<svg class="abs" style="left:1550px;top:420px" width="70" height="215" viewBox="1550 420 70 215"><path d="M1562.6 432.3Q1562.8 427 1566.6 427Q1570.4 427 1570.6 432.3L1591.3 591L1604.3 586.2L1584.4 625.5L1558.7 591L1571 593.7Z" fill="#E8432A"/></svg>
<svg class="abs" style="left:1768px;top:780px" width="50" height="50" viewBox="1768 780 50 50"><circle cx="1790.5" cy="802.8" r="16.6" fill="none" stroke="#D4D4D4" stroke-width="1.3"/><path d="M1783.3 813.5Q1783.6 805.5 1790.5 801.8Q1798 798.5 1804.5 803.5Q1808.5 807.5 1807.8 813.5L1805.9 817.6L1792.8 803.8L1795.6 824.8Q1790 825.5 1786.5 822.5Q1783.2 819 1783.3 813.5Z" fill="#2B2B2B" stroke="#2B2B2B" stroke-width="1.6"/><path d="M1783.3 813.5Q1783.6 805.5 1790.5 801.8Q1798 798.5 1804.5 803.5Q1808.5 807.5 1807.8 813.5L1805.9 817.6L1792.8 803.8L1795.6 824.8Q1790 825.5 1786.5 822.5Q1783.2 819 1783.3 813.5Z" fill="#D4D4D4"/><path d="M1785.5 800.5L1787.2 799L1788.6 796.2L1789.8 799L1792.5 799.5L1792.8 802.5L1787.5 804.8Z" fill="#D4D4D4"/></svg>
<svg class="abs" style="left:1810px;top:785px" width="90" height="36" viewBox="0 0 90 36"><text x="5.8" y="25.6" font-family="Liberation Sans" font-size="21.5" fill="#D6D6D6" stroke="#2B2B2B" stroke-width="0.5" textLength="75" lengthAdjust="spacingAndGlyphs">Seebug</text></svg>
</body></html>
